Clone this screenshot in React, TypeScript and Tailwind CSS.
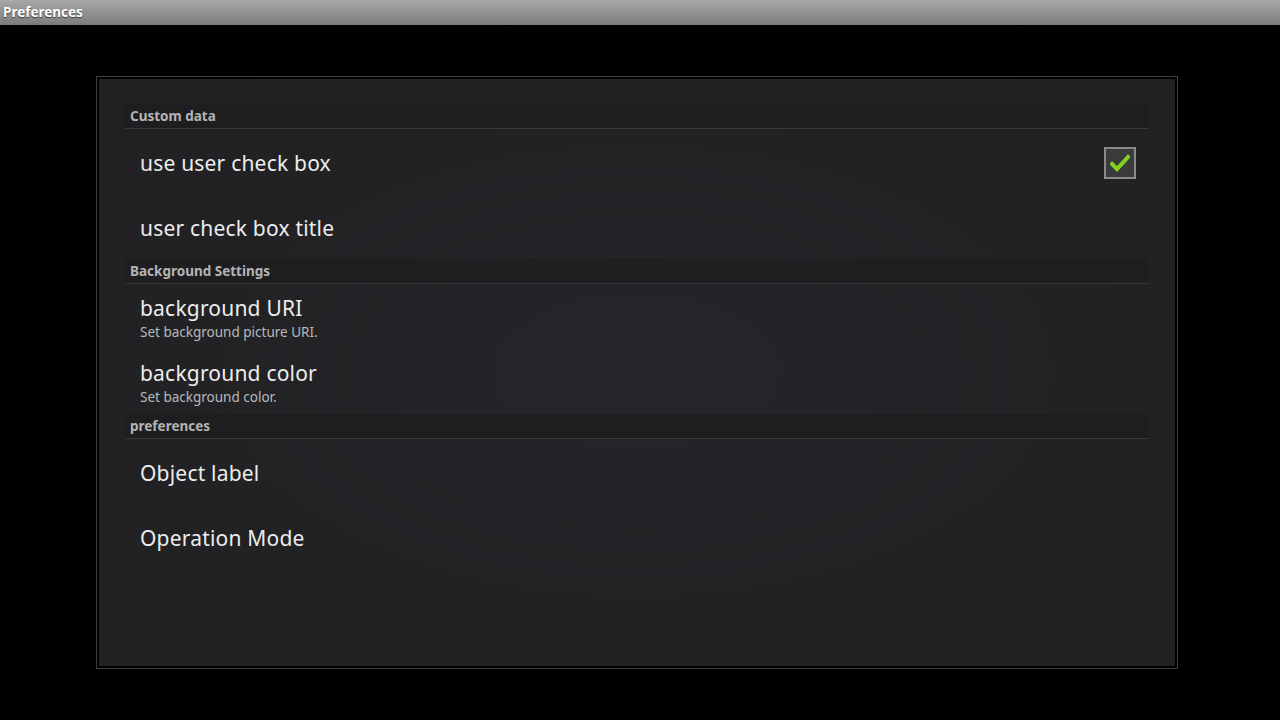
import React from 'react';

const font = { fontFamily: '"Noto Sans", "DejaVu Sans", sans-serif' };

const Header: React.FC<{ label: string }> = ({ label }) => (
  <div className="h-[25px] bg-[#1e1e20] border-b border-[#38383a] pl-[5px] pt-[1px] flex items-center">
    <span className="text-[13.5px] font-bold text-[#b4b4b4] leading-none">{label}</span>
  </div>
);

const Item: React.FC<{ title: string; summary?: string; checked?: boolean }> = ({ title, summary, checked }) => (
  <div className={`h-[65px] pl-[15px] pr-[12px] flex items-center justify-between ${summary ? 'pt-[4px]' : 'pt-[2px]'}`}>
    <div className="flex flex-col">
      <span className="text-[21px] tracking-[0.2px] text-[#ececec] leading-[26px]">{title}</span>
      {summary && <span className="text-[13.5px] text-[#b8b8b8] leading-[22px]">{summary}</span>}
    </div>
    {checked !== undefined && (
      <div className="w-[32px] h-[32px] border-2 border-[#8a8a8a] bg-[#3b3b3e] flex items-center justify-center">
        {checked && (
          <svg width="20" height="18" viewBox="0 0 20 18">
            <path d="M2 10 L7 15 L18 3" fill="none" stroke="#84d21c" strokeWidth="4" strokeLinecap="square" />
          </svg>
        )}
      </div>
    )}
  </div>
);

export default function App() {
  return (
    <div className="min-h-screen bg-black flex flex-col" style={font}>
      {/* window title bar */}
      <div className="h-[25px] bg-gradient-to-b from-[#a8a8a8] to-[#7c7c7c] flex items-center pl-[3px]">
        <span className="text-[13.5px] font-bold text-white [text-shadow:0_1px_1px_rgba(0,0,0,0.6)]">Preferences</span>
      </div>

      <div className="pt-[51px] pl-[96px]">
        <div className="w-[1082px] h-[593px] border border-[#3e3e40] p-[2px] bg-black">
          <div className="h-full bg-[radial-gradient(ellipse_at_center,#26262a_0%,#222225_60%,#212124_100%)] pt-[25px] pl-[26px] pr-[27px]">
            <Header label="Custom data" />
            <Item title="use user check box" checked />
            <Item title="user check box title" />
            <Header label="Background Settings" />
            <Item title="background URI" summary="Set background picture URI." />
            <Item title="background color" summary="Set background color." />
            <Header label="preferences" />
            <Item title="Object label" />
            <Item title="Operation Mode" />
          </div>
        </div>
      </div>
    </div>
  );
}
